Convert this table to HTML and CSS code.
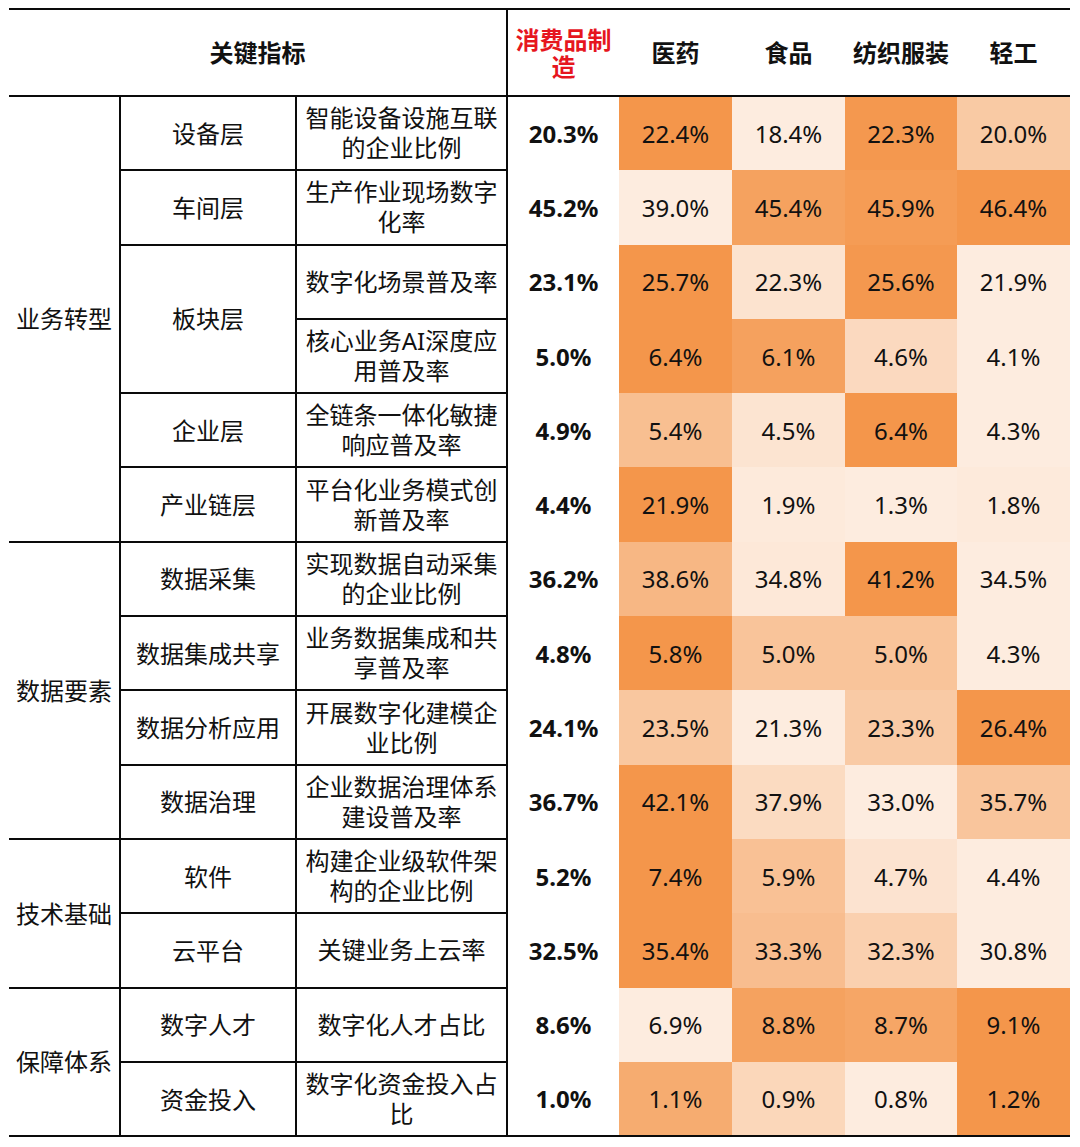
FILE: index.html
```html
<!DOCTYPE html>
<html lang="zh-CN">
<head>
<meta charset="utf-8">
<title>关键指标</title>
<link rel="stylesheet" href="styles.css">
</head>
<body>
<div class="page">
<table class="kpi">
  <colgroup>
    <col class="c-group"><col class="c-layer"><col class="c-metric"><col class="c-total">
    <col class="c-ind"><col class="c-ind"><col class="c-ind2"><col class="c-ind">
  </colgroup>
  <thead>
    <tr>
      <th colspan="3" class="h-key">关键指标</th>
      <th class="h-total">消费品制造</th>
      <th>医药</th><th>食品</th><th>纺织服装</th><th>轻工</th>
    </tr>
  </thead>
  <tbody>
    <tr>
      <td class="grp" rowspan="6">业务转型</td>
      <td class="layer">设备层</td>
      <td class="metric">智能设备设施互联的企业比例</td>
      <td class="total">20.3%</td>
      <td class="heat" style="--p:100%">22.4%</td><td class="heat" style="--p:0%">18.4%</td><td class="heat" style="--p:97.5%">22.3%</td><td class="heat" style="--p:40%">20.0%</td>
    </tr>
    <tr>
      <td class="layer">车间层</td>
      <td class="metric">生产作业现场数字化率</td>
      <td class="total">45.2%</td>
      <td class="heat" style="--p:0%">39.0%</td><td class="heat" style="--p:86.5%">45.4%</td><td class="heat" style="--p:93.2%">45.9%</td><td class="heat" style="--p:100%">46.4%</td>
    </tr>
    <tr>
      <td class="layer" rowspan="2">板块层</td>
      <td class="metric">数字化场景普及率</td>
      <td class="total">23.1%</td>
      <td class="heat" style="--p:100%">25.7%</td><td class="heat" style="--p:10.5%">22.3%</td><td class="heat" style="--p:97.4%">25.6%</td><td class="heat" style="--p:0%">21.9%</td>
    </tr>
    <tr>
      <td class="metric">核心业务AI深度应用普及率</td>
      <td class="total">5.0%</td>
      <td class="heat" style="--p:100%">6.4%</td><td class="heat" style="--p:87%">6.1%</td><td class="heat" style="--p:21.7%">4.6%</td><td class="heat" style="--p:0%">4.1%</td>
    </tr>
    <tr>
      <td class="layer">企业层</td>
      <td class="metric">全链条一体化敏捷响应普及率</td>
      <td class="total">4.9%</td>
      <td class="heat" style="--p:52.4%">5.4%</td><td class="heat" style="--p:9.5%">4.5%</td><td class="heat" style="--p:100%">6.4%</td><td class="heat" style="--p:0%">4.3%</td>
    </tr>
    <tr>
      <td class="layer">产业链层</td>
      <td class="metric">平台化业务模式创新普及率</td>
      <td class="total">4.4%</td>
      <td class="heat" style="--p:100%">21.9%</td><td class="heat" style="--p:2.9%">1.9%</td><td class="heat" style="--p:0%">1.3%</td><td class="heat" style="--p:2.4%">1.8%</td>
    </tr>
    <tr>
      <td class="grp" rowspan="4">数据要素</td>
      <td class="layer">数据采集</td>
      <td class="metric">实现数据自动采集的企业比例</td>
      <td class="total">36.2%</td>
      <td class="heat" style="--p:61.2%">38.6%</td><td class="heat" style="--p:4.5%">34.8%</td><td class="heat" style="--p:100%">41.2%</td><td class="heat" style="--p:0%">34.5%</td>
    </tr>
    <tr>
      <td class="layer">数据集成共享</td>
      <td class="metric">业务数据集成和共享普及率</td>
      <td class="total">4.8%</td>
      <td class="heat" style="--p:100%">5.8%</td><td class="heat" style="--p:46.7%">5.0%</td><td class="heat" style="--p:46.7%">5.0%</td><td class="heat" style="--p:0%">4.3%</td>
    </tr>
    <tr>
      <td class="layer">数据分析应用</td>
      <td class="metric">开展数字化建模企业比例</td>
      <td class="total">24.1%</td>
      <td class="heat" style="--p:43.1%">23.5%</td><td class="heat" style="--p:0%">21.3%</td><td class="heat" style="--p:39.2%">23.3%</td><td class="heat" style="--p:100%">26.4%</td>
    </tr>
    <tr>
      <td class="layer">数据治理</td>
      <td class="metric">企业数据治理体系建设普及率</td>
      <td class="total">36.7%</td>
      <td class="heat" style="--p:100%">42.1%</td><td class="heat" style="--p:20%">37.9%</td><td class="heat" style="--p:0%">33.0%</td><td class="heat" style="--p:45%">35.7%</td>
    </tr>
    <tr>
      <td class="grp" rowspan="2">技术基础</td>
      <td class="layer">软件</td>
      <td class="metric">构建企业级软件架构的企业比例</td>
      <td class="total">5.2%</td>
      <td class="heat" style="--p:100%">7.4%</td><td class="heat" style="--p:50%">5.9%</td><td class="heat" style="--p:10%">4.7%</td><td class="heat" style="--p:0%">4.4%</td>
    </tr>
    <tr>
      <td class="layer">云平台</td>
      <td class="metric">关键业务上云率</td>
      <td class="total">32.5%</td>
      <td class="heat" style="--p:100%">35.4%</td><td class="heat" style="--p:54.3%">33.3%</td><td class="heat" style="--p:32.6%">32.3%</td><td class="heat" style="--p:0%">30.8%</td>
    </tr>
    <tr>
      <td class="grp" rowspan="2">保障体系</td>
      <td class="layer">数字人才</td>
      <td class="metric">数字化人才占比</td>
      <td class="total">8.6%</td>
      <td class="heat" style="--p:0%">6.9%</td><td class="heat" style="--p:86.4%">8.8%</td><td class="heat" style="--p:81.8%">8.7%</td><td class="heat" style="--p:100%">9.1%</td>
    </tr>
    <tr class="last">
      <td class="layer">资金投入</td>
      <td class="metric">数字化资金投入占比</td>
      <td class="total">1.0%</td>
      <td class="heat" style="--p:75%">1.1%</td><td class="heat" style="--p:25%">0.9%</td><td class="heat" style="--p:0%">0.8%</td><td class="heat" style="--p:100%">1.2%</td>
    </tr>
  </tbody>
</table>
</div>
</body>
</html>
```

FILE: styles.css
```css
html, body {
  margin: 0;
  padding: 0;
  background: #ffffff;
}

.page {
  padding: 8px 0 0 9px;
}

.kpi {
  --line: 2px solid #0a0a0a;
  --dark: #f4964b;
  --light: #fdecdf;
  border-collapse: collapse;
  table-layout: fixed;
  width: 1061px;
  font-family: "Noto Sans", "Noto Sans CJK SC", sans-serif;
  font-size: 24px;
  color: #111111;
}

.c-group { width: 111px; }
.c-layer { width: 176px; }
.c-metric { width: 211px; }
.c-total { width: 112px; }
.c-ind { width: 113px; }
.c-ind2 { width: 112px; }

.kpi th,
.kpi td {
  padding: 0;
  text-align: center;
  vertical-align: middle;
}

.kpi thead tr {
  height: 87px;
}

.kpi th {
  font-weight: 700;
  line-height: 27px;
  border-top: var(--line);
  border-bottom: var(--line);
}

.kpi .h-key {
  border-right: var(--line);
}

.kpi .h-total {
  color: #e6161e;
  padding: 0 6px;
}

.kpi tbody tr {
  height: 74.3px;
}

.kpi td {
  line-height: 29px;
}

.kpi .grp,
.kpi .layer,
.kpi .metric {
  border-right: var(--line);
  border-bottom: var(--line);
}

.kpi .grp {
  padding: 0 4px;
}

.kpi .metric {
  padding: 0 8px;
  line-height: 30px;
}

.kpi .total {
  font-weight: 700;
}

.kpi .heat {
  background: color-mix(in srgb, var(--dark) var(--p), var(--light));
}

.kpi .last td {
  border-bottom: var(--line);
}
```
